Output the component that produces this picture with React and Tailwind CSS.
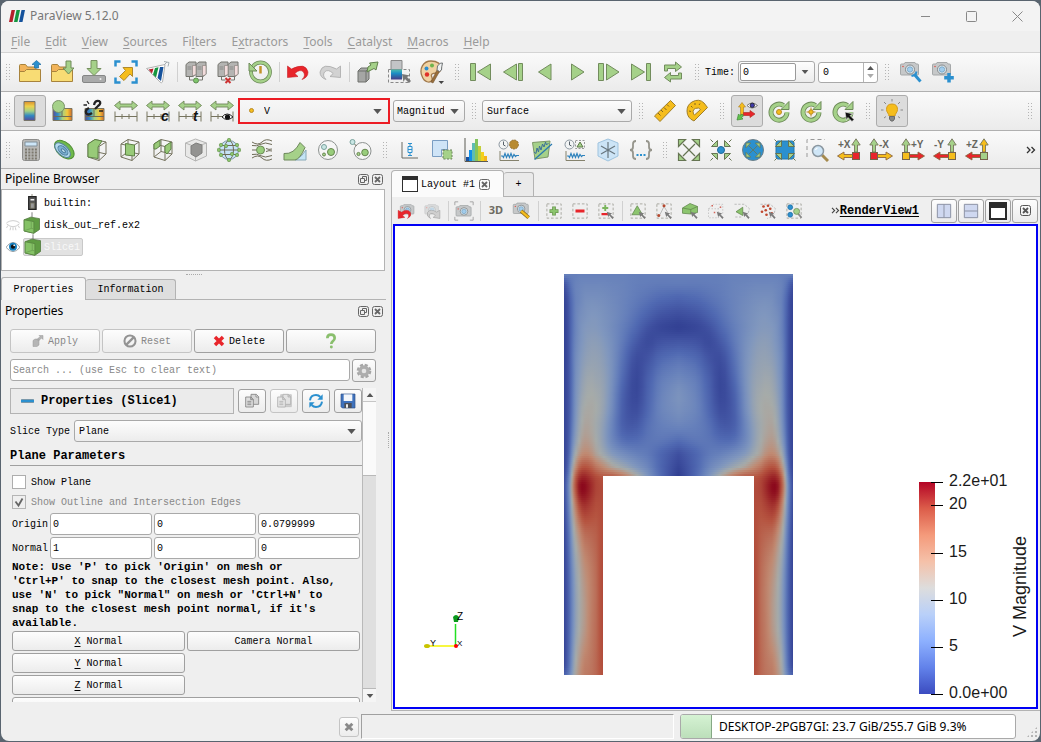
import { clsx } from 'clsx'

const GREEN = '#a5d189'
const LINE = '#6e6b57'
const BLUE = '#2b90cf'
const GOLD = '#f5bd1c'
const RED = '#e8252b'

const Icon = ({ children, className = 'size-6' }) => (
  <svg viewBox="0 0 24 24" className={clsx('shrink-0', className)} fill="none" stroke={LINE} strokeWidth="1" aria-hidden="true">
    {children}
  </svg>
)

// ---------- Shared icon parts ----------

const Folder = () => (
  <>
    <path d="M1.5 20V5.500q0-1 1-1h5l2 2.500h8.500v3" fill="#f2b45a" stroke="#a8833c" />
    <path d="M1.500 21.500v-10h5l2-2h14v12z" fill="#f8dc74" stroke="#a8833c" />
  </>
)

const Server = () => (
  <>
    <path d="M2 4.500 5 2h7v12l-3 2.500H2z" fill="#b4b4b2" stroke="#75756f" />
    <path d="M12 4.500 15 2h7v12l-3 2.500h-7z" fill="#b4b4b2" stroke="#75756f" />
    <path d="M8.500 5.500h3.500v9l-3.500 1.500zM18.500 5.500H22v9L18.500 16z" fill="#f2dcdc" stroke="#8d8783" strokeWidth=".7" />
    <path d="M3.500 7h4M3.500 9h4M13.500 7h4M13.500 9h4" stroke="#80807d" strokeWidth=".8" />
    <path d="M5.500 16.500v3.500h4M18.500 16.500v3.500h-4" stroke="#75756f" />
  </>
)

const Cube = ({ face = GREEN }) => (
  <>
    <path d="M3 6 10 1.500 21 4v12l-7 6.500L3 19z" fill="none" stroke="#75735f" />
    <path d="M3 6l11 2.500L21 4M14 8.500v14M10 1.500v12L3 19M10 13.500 21 16" stroke="#75735f" />
    <path d={face} fill="#98ca78" stroke="#5e8246" />
  </>
)

const RangeArrow = ({ children }) => (
  <Icon className="h-6 w-6">
    <path d="M.5 6.500 6 2v3h12V2l5.500 4.500L18 11V8H6v3z" fill={GREEN} stroke="#71875a" strokeWidth=".9" />
    <path d="M1 12.500v10M23 12.500v10M1 17.500h22M8 15v5M15 15v5" stroke="#76745f" />
    {children}
  </Icon>
)

const CurvedArrow = () => (
  <>
    <path d="M20 13.500a8 8 0 1 1-3.500-7" stroke="#6c8958" strokeWidth="5" />
    <path d="M22 2.500v8h-8z" fill={GREEN} stroke="#6c8958" />
    <path d="M20 13a8 8 0 1 1-3-6" stroke={GREEN} strokeWidth="3.200" />
  </>
)

const Lens = ({ x = 0, y = 0 }) => (
  <g transform={`translate(${x} ${y})`}>
    <path d="m15 15 6 6" stroke="#a58a4d" strokeWidth="3" />
    <circle cx="11" cy="11" r="5.500" fill="#cfe6f7" stroke="#8b97a0" strokeWidth="1.500" />
    <path d="M8.500 10a3 3 0 0 1 2-2" stroke="#fff" strokeWidth="1.200" />
  </g>
)

const CameraBody = ({ faded = false }) => (
  <g opacity={faded ? 0.5 : 1}>
    <path d="M1.500 5q0-1 1-1H5l1-1.500h10L17 4h1.500q1 0 1 1v9q0 1-1 1h-16q-1 0-1-1z" fill="#c6c8c9" stroke="#a5a8a9" />
    <circle cx="11" cy="9.500" r="4.500" fill="#e4ebef" stroke="#83898c" />
    <circle cx="11" cy="9.500" r="2.700" fill="#a3cdec" stroke="#6f9fc0" strokeWidth=".8" />
    <circle cx="4" cy="6.500" r=".8" fill="#e0564f" stroke="none" />
  </g>
)

const Dashed = ({ className = '' }) => (
  <rect x="2.500" y="2.500" width="19" height="19" className={className} stroke="#96958c" strokeDasharray="3.500 2.500" />
)

const SmallPointer = () => (
  <path d="m13 13 2 7 1.500-2 4 4.500 1.700-1.700-4.200-4 2.200-1.500z" fill="#7a7a7a" stroke="none" />
)

const Clock = () => (
  <>
    <circle cx="6.500" cy="6.500" r="4.500" fill="#f2f4f5" stroke="#8b969f" />
    <path d="M6.500 3.500v3.500l2 1" stroke="#57616a" />
  </>
)

const Pulse = () => (
  <>
    <path d="M3 13v9.500h19" stroke="#85826d" />
    <path d="M4 18h1.500l1 1.500 1.500-4 1.500 4 1.500-3.500 1.500 3.500 1.500-4 1.500 4 1.500-3 1.500 2 1-1H22" stroke="#2f83bd" strokeWidth="1.200" />
  </>
)

const Arrow4 = ({ out = true, fill = GREEN }) => (
  <>
    {[0, 90, 180, 270].map((deg) => (
      <g key={deg} transform={`rotate(${deg} 12 12)`}>
        {out ? (
          <path d="m12 12-6-6M1.500 1.500h7l-7 7z" fill={fill} stroke="#667553" strokeWidth="1.200" />
        ) : (
          <path d="M1.500 1.500 4 4M8.500 2.500v6h-6z" fill={fill} stroke="#667553" />
        )}
      </g>
    ))}
  </>
)

const AxisIcon = ({ label, left = true, up, side, box }) => (
  <Icon className="size-6">
    <g transform={left ? 'translate(24 0) scale(-1 1)' : undefined}>
      <path d="M3.500 14V7H.8L5 .8 9.200 7H6.500v7z" fill={up} stroke="#76765b" strokeWidth=".9" />
      <path d="M8 16.500h9v-2.500l6.500 4-6.500 4v-2.500H8z" fill={side} stroke="#8c6540" strokeWidth=".9" />
      <rect x="1.500" y="14.500" width="7" height="7" fill={box} stroke="#76654a" />
    </g>
    <text x={left ? 1 : 10} y="10" fill="#66665e" stroke="none" fontSize="10" fontWeight="bold" fontFamily="Liberation Sans, sans-serif">
      {label}
    </text>
  </Icon>
)

const Histogram = () => (
  <Icon>
    {[
      [2, 4, '#1c4f9c'], [5, 11, '#0e8ee8'], [8, 18, '#5dbcb4'], [11, 22, '#83c45d'],
      [14, 15, '#c3cf3b'], [17, 9, '#f4d01c'], [20, 5, '#f4b41c'],
    ].map(([x, h, fill]) => (
      <rect key={x} x={x} y={23 - h} width="3" height={h} fill={fill} stroke="none" />
    ))}
    <path d="M1 0v23.500h23" stroke="#5a5a52" />
  </Icon>
)

const Rainbow = ({ id, vertical }) => (
  <linearGradient id={id} x1="0" y1="0" x2={vertical ? 0 : 1} y2={vertical ? 1 : 0}>
    <stop offset="0" stopColor={vertical ? '#d98f2e' : '#5a4a9b'} />
    <stop offset=".25" stopColor={vertical ? '#efd14a' : '#2f8dc4'} />
    <stop offset=".5" stopColor="#a3d183" />
    <stop offset=".75" stopColor={vertical ? '#2f86c4' : '#f3c93c'} />
    <stop offset="1" stopColor={vertical ? '#584b96' : '#cf6a28'} />
  </linearGradient>
)

const Eye = ({ className = 'h-4 w-4' }) => (
  <Icon className={className}>
    <path d="M0 12.500q12-17 24 0-12 15-24 0z" fill="#fff" stroke="#8d979e" strokeWidth="1.500" />
    <circle cx="12" cy="11.500" r="6.800" fill="#1580c0" stroke="none" />
    <circle cx="12" cy="11.500" r="3.700" fill="#111" stroke="none" />
    <circle cx="14" cy="9" r="1.500" fill="#fff" stroke="none" />
  </Icon>
)

// ---------- Toolbar pieces ----------

const Handle = ({ className = 'w-[17px]' }) => (
  <span className={clsx('flex shrink-0 justify-center', className)}>
    <span className="h-[18px] w-[6px] bg-[radial-gradient(circle,#b4b4b4_1px,transparent_1px)] bg-[size:3px_3px]" />
  </span>
)

const Sep = () => (
  <span className="flex w-[6px] shrink-0 justify-center">
    <span className="h-5 w-px bg-[#d0d0d0]" />
  </span>
)

const Tool = ({ label, active, wide, children }) => (
  <button
    type="button"
    aria-label={label}
    title={label}
    className={clsx(
      'flex h-8 shrink-0 items-center justify-center rounded-[3px]',
      wide ? 'w-[33px]' : 'w-8',
      active && 'border border-[#acacac] bg-[#dcdcdc]'
    )}
  >
    {children}
  </button>
)

const ViewTool = ({ label, children }) => (
  <button type="button" aria-label={label} title={label} className="flex h-6 w-[26px] shrink-0 items-center justify-center">
    {children}
  </button>
)

const Toolbar = ({ label, children, className }) => (
  <div
    role="toolbar"
    aria-label={label}
    className={clsx('flex shrink-0 items-center border-b border-[#b0b0b0] bg-linear-to-b from-[#fafafa] to-[#ebebeb]', className)}
  >
    <Handle className="w-[13px]" />
    {children}
  </div>
)

const boxStyles = 'rounded-[3px] border border-[#a9a9a9]'
const raised = 'bg-linear-to-b from-[#fdfdfd] to-[#ececec]'

const Select = ({ label, value, className, selectClass = 'pl-1' }) => (
  <span className={clsx('relative block shrink-0', className)}>
    <select
      aria-label={label}
      defaultValue={value}
      className={clsx('block size-full appearance-none overflow-hidden pr-5 outline-none', selectClass)}
    >
      <option>{value}</option>
    </select>
    <span className="pointer-events-none absolute inset-y-0 right-1.5 flex items-center">
      <svg viewBox="0 0 10 6" className="h-[5px] w-[9px]" fill="#555"><path d="M0 0h10L5 6z" /></svg>
    </span>
  </span>
)

const Field = ({ label, value, className }) => (
  <input aria-label={label} defaultValue={value} className={clsx(boxStyles, 'min-w-0 bg-white px-0.5 outline-none', className)} />
)

const PushButton = ({ label, children, disabled, className }) => (
  <button
    type="button"
    disabled={disabled}
    aria-label={label}
    className={clsx(
      'flex items-center justify-center gap-1 rounded-[3px] border', raised,
      disabled ? 'border-[#c4c4c4] text-[#888]' : 'border-[#a0a0a0]',
      className
    )}
  >
    {children}
  </button>
)

// ---------- Title bar and menu ----------

const TitleBar = () => (
  <header className="flex h-[30px] shrink-0 items-center bg-[#f3f3f3] pl-2 text-[12px] text-[#777]">
    <svg viewBox="0 0 16 12" className="h-3 w-4" aria-hidden="true">
      <path d="M2.500 0H6L3.500 12H0z" fill="#b5202c" />
      <path d="M7.500 0H11L8.500 12H5z" fill="#15963f" />
      <path d="M12.500 0H16l-2.500 12H10z" fill="#15529c" />
    </svg>
    <h1 className="ml-[5px] flex-1">ParaView 5.12.0</h1>
    {[
      ['Minimize', 'M1 5.500h9'],
      ['Maximize', 'M1.500.5h8q1 0 1 1v8q0 1-1 1h-8q-1 0-1-1v-8q0-1 1-1z'],
      ['Close', 'm.5.5 10 10m0-10-10 10'],
    ].map(([name, d]) => (
      <button key={name} type="button" aria-label={name} className="flex h-full w-[46px] items-center justify-center">
        <svg viewBox="0 0 11 11" className="size-[11px]" fill="none" stroke="#888"><path d={d} /></svg>
      </button>
    ))}
  </header>
)

const menus = [
  ['', 'F', 'ile'], ['', 'E', 'dit'], ['', 'V', 'iew'], ['', 'S', 'ources'], ['Fi', 'l', 'ters'],
  ['E', 'x', 'tractors'], ['', 'T', 'ools'], ['', 'C', 'atalyst'], ['', 'M', 'acros'], ['', 'H', 'elp'],
]

const MenuBar = () => (
  <nav className="flex h-[22px] shrink-0 items-center gap-[15px] border-b border-[#d4d4d4] bg-[#efefef] pl-[10px] text-[12px] text-[#9a9a9a]">
    {menus.map(([a, key, b]) => (
      <button key={a + key + b} type="button">{a}<u className="underline-offset-2">{key}</u>{b}</button>
    ))}
  </nav>
)

// ---------- Toolbars ----------

const MainToolbar = () => (
  <Toolbar label="Main controls" className="h-[39px]">
    <Tool label="Open"><Icon><Folder /><path d="M16.500 8V4.500H14L18.500.5 23 4.500h-2.500V8z" fill={BLUE} stroke="#1d6da3" strokeWidth=".7" /></Icon></Tool>
    <Tool label="Load state"><Icon><Folder /><path d="M16 1h5v7h3l-5.500 6L13 8h3z" fill={GREEN} stroke="#6e8a58" /></Icon></Tool>
    <Tool label="Save data"><Icon><rect x=".5" y="15.500" width="23" height="7" rx="1.500" fill="#a9aaaa" stroke="#858686" /><path d="M9 .5h6v8h4l-7 7-7-7h4z" fill={GREEN} stroke="#76905f" /><circle cx="18.500" cy="19" r="1" fill="#eee" stroke="none" /></Icon></Tool>
    <Tool label="Save extracts">
      <Icon>
        <path d="M1.500 6.500v-5h5M17.500 1.500h5v5M22.500 17.500v5h-5M6.500 22.500h-5v-5" stroke={BLUE} strokeWidth="2.500" />
        <path d="m5.500 16.500 6-6L9 7.500h9.500v9L16 14l-6 6.500z" fill={GOLD} stroke="#b08a2d" />
      </Icon>
    </Tool>
    <Tool label="Catalyst">
      <Icon>
        <path d="M.5 8.500 19 4.500l-2.500 17.500q-1 1.500-2.500 0z" fill="#fff" stroke="#b0b0b0" />
        <path d="m2.500 9.500 5-1-1.500 5z" fill="#b5202c" stroke="none" />
        <path d="m9 8 3.500-.7L10 17.500 7 14.500z" fill="#15963f" stroke="none" />
        <path d="M14 7h3.500l-2.500 14-3.500-3z" fill="#15529c" stroke="none" />
        <path d="m18 5 3-3M18 1.500l5 1-1 4" stroke="#a5adb1" />
      </Icon>
    </Tool>
    <Sep />
    <Tool label="Connect"><Icon><Server /><circle cx="12" cy="20.500" r="2.500" fill="#7fc56c" stroke="#5d8b50" /></Icon></Tool>
    <Tool label="Disconnect"><Icon><Server /><path d="m9.500 18 5 5m0-5-5 5" stroke="#c33" strokeWidth="2" /></Icon></Tool>
    <Tool label="Auto reload">
      <Icon>
        <circle cx="12.500" cy="12" r="9.500" stroke="#6c8958" strokeWidth="3.800" />
        <circle cx="12.500" cy="12" r="9.500" stroke={GREEN} strokeWidth="2.300" />
        <path d="M1 3v8h8z" fill={GREEN} stroke="#6c8958" />
        <path d="M12.500 6v7.500" stroke="#c4932b" strokeWidth="2.500" />
      </Icon>
    </Tool>
    <Sep />
    <Tool label="Undo"><Icon><path d="M1.500 6v11.500l10.500-1-3.200-3Q14 8.500 17.500 12q2.500 4-1.500 7.500Q22 17.500 22 12 19.500 2 5.500 9z" fill={RED} stroke="#c62026" strokeWidth=".6" /></Icon></Tool>
    <Tool label="Redo"><Icon><path d="M22.500 6v11.500l-10.500-1 3.200-3Q10 8.500 6.500 12q-2.500 4 1.500 7.500Q2 17.500 2 12 4.500 2 18.500 9z" fill="#d2d2d2" stroke="#aaa" strokeWidth=".8" /></Icon></Tool>
    <Sep />
    <Tool label="Auto apply"><Icon><path d="m2 11 3-3h8v11l-3 3H2z" fill="#a5a6a4" stroke="#6f706d" /><path d="M2 11h8v11M10 11l3-3" stroke="#6f706d" /><path d="m11 12 1-5 3-2-1.500-2 8.500-1-2 8-2-1.500-3 1.500z" fill={GREEN} stroke="#60804b" /></Icon></Tool>
    <Tool label="Find data">
      <Icon>
        <defs>
          <linearGradient id="find" x1="0" y1="0" x2="0" y2="1"><stop offset="0" stopColor="#4cbcae" /><stop offset=".4" stopColor="#1c8cc4" /><stop offset="1" stopColor="#473c86" /></linearGradient>
        </defs>
        <path d="M.5 9.500h21v13H.5z" stroke="#888" strokeDasharray="3 2" />
        <path d="M3 .5h11v9H3z" fill="#c2c4c6" stroke="#888" />
        <path d="M3 9.500h11v10H3z" fill="url(#find)" stroke="none" />
        <path d="m14 14 8 1.500-3 1.500 4 4-2 2-4-4-1.500 3z" fill="#777" stroke="none" />
      </Icon>
    </Tool>
    <Tool label="Color palette">
      <Icon>
        <path d="M11 1C3 1-1 9 2 16c2 6 8 8 10 4 1-3-2-4 0-6 3-2 8 1 9-5C22 4 17 1 11 1z" fill="#f0d2a2" stroke="#a0794c" strokeWidth="1.300" />
        <circle cx="6.500" cy="8.500" r="2" fill="#2d8ed0" stroke="none" />
        <circle cx="12" cy="5.500" r="2" fill="#6fb44c" stroke="none" />
        <circle cx="7" cy="14.500" r="2.200" fill="#e03028" stroke="none" />
        <path d="m11 22 6-12 2.500 1.500L13 23z" fill="#9a6e3a" stroke="#6f5230" strokeWidth=".6" />
        <path d="m17 10 .5-4q3-4 5-3-1 4-1 7l-2 1.500z" fill="#eef1f2" stroke="#6f7375" />
        <path d="M18.500 21H24l-2.700 3z" fill="#444" stroke="none" />
      </Icon>
    </Tool>
    <Handle />
    {[
      ['First frame', <path d="M1.500 3.500h5v17h-5zM21.500 4v16L8.500 12z" />],
      ['Previous frame', <path d="M17.500 3.500h4v17h-4zM15.500 4v16L2.500 12z" />],
      ['Reverse', <path d="M18 4v16L5.500 12z" />],
      ['Play', <path d="M6.500 4v16L19 12z" />],
      ['Next frame', <path d="M1.500 3.500h5v17h-5zM9.500 4v16l12.500-8z" />],
      ['Last frame', <path d="M17.500 3.500h4v17h-4zM2.500 4v16l13-8z" />],
      ['Loop', <path d="M3.500 11V5h11V2l6 5-6 4.500V8.500h-8V11zM20.500 13v6h-11v3l-6-4.500 6-5V15.500h8V13z" />],
    ].map(([name, shape]) => (
      <Tool key={name} label={name}><Icon><g fill={GREEN} stroke="#728c5d">{shape}</g></Icon></Tool>
    ))}
    <Handle className="w-4" />
    <label className="flex shrink-0 items-center gap-[3px]">
      Time:
      <span className={clsx(boxStyles, raised, 'flex h-[22px] w-[77px] p-px')}>
        <input defaultValue="0" className="h-full w-14 rounded-[2px] border border-[#999] bg-white px-0.5 outline-none" />
        <span className="flex flex-1 items-center justify-center">
          <svg viewBox="0 0 10 6" className="h-1 w-2" fill="#555"><path d="M0 0h10L5 6z" /></svg>
        </span>
      </span>
    </label>
    <span className={clsx(boxStyles, 'ml-[3px] flex h-[21px] w-[60px] shrink-0 bg-white')}>
      <input aria-label="Time step" defaultValue="0" className="w-[45px] border-r border-[#b5b5b5] px-1 outline-none" />
      <span className="flex flex-1 flex-col items-center justify-center gap-1">
        <svg viewBox="0 0 10 6" className="h-1 w-[7px]" fill="#555"><path d="M0 6h10L5 0z" /></svg>
        <svg viewBox="0 0 10 6" className="h-1 w-[7px]" fill="#aaa"><path d="M0 0h10L5 6z" /></svg>
      </span>
    </span>
    <Handle />
    <Tool label="Adjust camera"><Icon><CameraBody /><path d="m15 14 6.500 7.500" stroke={BLUE} strokeWidth="3" /><path d="m17.500 11.500-1 3.500-4 1" stroke={BLUE} strokeWidth="2" /></Icon></Tool>
    <Tool label="Add camera link"><Icon><CameraBody /><path d="M18 13v9.500M13.200 17.700h9.600" stroke={BLUE} strokeWidth="3.500" /></Icon></Tool>
  </Toolbar>
)

const ColorToolbar = () => (
  <Toolbar label="Color and representation" className="h-[39px]">
    <Tool label="Toggle color legend" active>
      <Icon><defs><Rainbow id="legend" vertical /></defs><path d="M6 2.500h11v19H6z" fill="url(#legend)" stroke="#77746a" /></Icon>
    </Tool>
    <Tool label="Edit color map">
      <Icon>
        <defs><Rainbow id="bar" /></defs>
        <path d="M3 9.500h19v12H3z" fill="url(#bar)" stroke="#7b765f" />
        <path d="M3 17.500h19M12 9.500v8" /><circle cx="8.500" cy="7.500" r="6" fill={GREEN} stroke="#7a9367" />
      </Icon>
    </Tool>
    <Tool label="Use separate color map">
      <Icon>
        <path d="M3 9.500h19v12H3z" fill="url(#bar)" stroke="#7b765f" /><path d="M3 17.500h19M12 9.500v8" />
        <path d="M10 14q-4 3-6 0-1-3 3-5M12 6q1-5 5-4 3 2-1 5l-3 3" stroke="#222" strokeWidth="2.300" />
        <path d="m5 2 2 3M1.500 6H5M17 12h4" stroke="#222" strokeWidth="1.300" />
      </Icon>
    </Tool>
    <Tool label="Rescale to data range"><RangeArrow /></Tool>
    {[['Rescale to custom range', 'c'], ['Rescale over time', 't']].map(([name, letter]) => (
      <Tool key={letter} label={name}>
        <RangeArrow>
          <text x="15" y="22" fill="#111" stroke="none" fontSize="14" fontStyle="italic" fontWeight="bold" fontFamily="Liberation Sans, sans-serif">{letter}</text>
        </RangeArrow>
      </Tool>
    ))}
    <Tool label="Rescale to visible range">
      <RangeArrow>
        <path d="M12 18q5-6 11 0-6 5-11 0z" fill="#fff" stroke="#222" /><circle cx="17.500" cy="18" r="2.600" fill="#111" stroke="none" />
      </RangeArrow>
    </Tool>
    <span className="relative block h-[26px] w-[152px] shrink-0 border-2 border-[#ec1c24]">
      <Select label="Color array" value="V" className="size-full" selectClass="pl-6" />
      <span className="pointer-events-none absolute top-2 left-[9px] size-[5px] rounded-full border border-[#b98a26] bg-[#f5bd1c]" />
    </span>
    <Select label="Component" value="Magnitude" className="ml-[3px] h-[22px] w-[72px]" selectClass={clsx(boxStyles, raised, 'pl-[3px]')} />
    <Handle />
    <Select label="Representation" value="Surface" className="h-[22px] w-[150px]" selectClass={clsx(boxStyles, raised, 'pl-1')} />
    <Handle />
    <Tool label="Ruler"><Icon><path d="m1.500 17 16-15.500 5 5L7 22.500z" fill={GOLD} stroke="#a17f2a" /><path d="m5 14 2.500 2.500M8 11l2 2M11 8.500l2.500 2.500M14 5.500l2 2" stroke="#806522" /></Icon></Tool>
    <Tool label="Protractor"><Icon><path d="M2 12q0-6 5-9 7-4 12 1l3.500 4.500L9 22Q2 19 2 12z" fill={GOLD} stroke="#a17f2a" /><path d="M8.500 15q-2-6 5-6l2 1.500-6 5.500z" fill="#f4f4f4" stroke="#a17f2a" /><path d="m4 12 2 .5M6 7l1.500 1.500M10 4v2M15 4.500l-1 1.500" stroke="#806522" /></Icon></Tool>
    <Handle className="w-[18px]" />
    <Tool label="Show orientation axes" active>
      <Icon>
        <path d="M5.500 16V8h-2L7 3.500 10.500 8h-2v8z" fill={GOLD} stroke="#b0852d" strokeWidth=".7" />
        <path d="M8.500 13.500H15V11.500l5 3.500-5 3.500v-2H8.500z" fill={RED} stroke="#b33426" strokeWidth=".7" />
        <path d="m7 15-2 1.500-1.500-1.500-1.500 6 6-1-1.500-1.500L8.500 17z" fill="#5fc14c" stroke="#3f8a35" strokeWidth=".7" />
        <path d="M12 6.500q5-5 10.500 0-5.500 5-10.500 0z" fill="#fff" stroke="#777" /><circle cx="17.300" cy="6.300" r="2.200" fill="#3f3aa8" stroke="#222" strokeWidth=".8" />
      </Icon>
    </Tool>
    <Tool label="Show center"><Icon><CurvedArrow /><circle cx="12" cy="13" r="2.500" fill={GOLD} stroke="#b98a26" /></Icon></Tool>
    <Tool label="Reset center"><Icon><CurvedArrow /><path d="M12 8.500v9M7.500 13h9" stroke="#b98a26" /><circle cx="12" cy="13" r="2.200" fill={GOLD} stroke="#b98a26" /></Icon></Tool>
    <Tool label="Pick center"><Icon><CurvedArrow /><path d="m14 13 8 2-3 1.500 4 4-2 2-4-4-1.500 3z" fill="#111" stroke="#eee" strokeWidth=".6" /></Icon></Tool>
    <Handle />
    <Tool label="Light kit" active>
      <Icon>
        <path d="M12 5q5.500 0 5.500 5.500c0 3-2.500 4-2.500 6.500H9c0-2.500-2.500-3.500-2.500-6.500Q6.500 5 12 5z" fill={GOLD} stroke="#d39b1c" />
        <path d="M9.500 17.500h5v2.500l-1.500 2h-2l-1.500-2z" fill="#858886" stroke="#6a6a6a" />
        <path d="M12 0v2.500M4 3l2 2M20 3l-2 2M1 11h2.500M20.500 11H23M4 19l2-1.500M20 19l-2-1.500" stroke="#888" />
      </Icon>
    </Tool>
    <span className="flex-1" />
    <Handle className="w-[21px]" />
  </Toolbar>
)

const filters = [
  ['Calculator', <><rect x="3.500" y="1.500" width="17" height="21" rx="2" fill="#b9b9b7" stroke="#8d8d8b" /><path d="M6 4h12v4H6z" fill="#cde6f8" stroke="#84929b" /><path d="M6 11.500h12M6 14.500h12M6 17.500h12M6 20.500h12" stroke="#7d796e" strokeWidth="1.800" strokeDasharray="2 1.300" /></>],
  ['Contour', <g transform="rotate(42 12 12)"><ellipse cx="12" cy="11.500" rx="11.500" ry="7" fill="#6fb94b" stroke="#4d8c32" /><ellipse cx="11" cy="13" rx="9.500" ry="5" fill="#b4daee" stroke="#55839a" /><ellipse cx="11.500" cy="13" rx="6" ry="3.300" fill="#7cb0d2" stroke="#4f7f9f" /><ellipse cx="12" cy="13" rx="2.500" ry="1.300" fill="#c3e2f0" stroke="#4f7f9f" /></g>],
  ['Clip', <Cube face="M3 6 10 1.500l7 1.500-4 6v11.500L3 19z" />],
  ['Slice', <Cube face="m7.500 5.500 9 1.500v11l-9-1z" />],
  ['Threshold', <Cube face="M3 6l6-4v6l-4 3H3zM14 8l6-4v7l-4 5-2-2z" />],
  ['Extract subset', <><path d="m1.500 5 10-4 11 4v13l-11 5-10-5z" fill="#e8e8e7" stroke="#b5b5b4" /><path d="m1.500 5 10 4 11-4M11.500 9v14" stroke="#b5b5b4" /><path d="m7 8 5-3 6 2v8l-6 4-5-3z" fill="#939391" stroke="#7d7d7b" /></>],
  ['Glyph', <><circle cx="12" cy="12" r="9.500" fill="#c6e3f7" stroke="#8199a6" /><ellipse cx="12" cy="12" rx="4.500" ry="9.500" /><path d="M3.500 7.500h17M3.500 16.500h17M1.500 12h21" />{[[12, 2], [12, 22], [4, 7], [20, 7], [4, 17], [20, 17], [1.8, 12], [22.2, 12], [9, 8], [15, 16]].map(([x, y]) => <circle key={`${x}-${y}`} cx={x} cy={y} r="1.700" fill="#8bc56c" stroke="#6a9653" strokeWidth=".7" />)}</>],
  ['Stream tracer', <><path d="M2 4q6 4 10 0t10-1M2 7.500q5 1 8-1 5-3 12 0M2 12h4M2 16.500q5-1 8 1 5 3 12 0M2 20q6-4 10 0t10 1M16 10.500q3 1.500 6 .5M16 13.500q3-1.500 6-.5" /><circle cx="10.500" cy="12" r="4" fill="#98cd7b" stroke="#6b8856" /></>],
  ['Warp', <><path d="M23 12v10H12q7-3 11-10z" fill="#c3e4f5" stroke="#86a8b6" /><path d="M1 15.500q10 1 16-11l5 5Q17 21 12 22H1z" fill={GREEN} stroke="#6c875a" /></>],
  ['Group datasets', <><circle cx="12" cy="12" r="9.500" fill="#f6f6f6" stroke="#8d9290" /><circle cx="15" cy="14" r="3.500" fill="#98cd7b" stroke="#66864f" /><circle cx="8" cy="9" r="2.500" fill="#c9e6e4" stroke="#7aa39d" /><circle cx="8" cy="16.500" r="1.500" fill={GREEN} stroke="#66864f" /></>],
  ['Extract group', <><circle cx="13.500" cy="13" r="8.500" fill="#f6f6f6" stroke="#8d9290" /><circle cx="16" cy="14.500" r="3.300" fill="#98cd7b" stroke="#66864f" /><circle cx="3.500" cy="4" r="2.500" fill="#c9e6e4" stroke="#7aa39d" /><circle cx="9.500" cy="16" r="1.600" fill={GREEN} stroke="#66864f" /><path d="m5.500 6 2 2" /></>],
]

const analysis = [
  ['Box chart', <><path d="M4 4v16h16" stroke="#6a6a62" /><path d="M12 5v13M10 5.500h4M10 17.500h4" stroke={BLUE} /><path d="M10 8.500h4v6h-4zM10 11.500h4" fill="#eaf4fb" stroke={BLUE} /></>],
  ['Extract selection', <><path d="M1.500 2.500h15v9h-6v7h-9z" fill="#cfe4f7" stroke="#7a9dc2" /><path d="M12 12h9v9h-9z" fill={GREEN} stroke="#68805a" strokeDasharray="2 1.500" /></>],
  ['Histogram', null],
  ['Plot data over time', <><Clock /><circle cx="17" cy="6.500" r="4.500" fill="#b88a30" stroke="#927030" strokeDasharray="2 1" /><Pulse /></>],
  ['Plot over line', <><path d="M2.500 4.500 20 3l-2 16L5 21z" fill={GREEN} stroke="#7c9766" /><path d="M4.500 21.500 22 6" stroke="#2879b0" strokeWidth="1.200" /><path d="m4 14 2 1.500L7 10l1.500 4 1-6 1.500 4 1.500-6 1.500 3 1.500-5 1 3 2-2" stroke="#3a6f99" /></>],
  ['Plot selection over time', <><Clock /><path d="M12.500 2.500h9v8h-9z" stroke="#999" strokeDasharray="2 1.500" /><path d="m17 4 3 5h-6z" fill={GREEN} stroke="#5d7a49" /><Pulse /></>],
  ['Probe', <><path d="m2 5 10-4 10 4v13l-10 5-10-5z" fill="#cce4f6" stroke="#9fc3de" /><path d="M12 4v16M5 8l14 8M19 8 5 16" stroke="#69777f" strokeWidth="1.200" /></>],
  ['Programmable filter', <><path d="M7 3Q4 3 4 6v3q0 3-3 3 3 0 3 3v3q0 3 3 3M17 3q3 0 3 3v3q0 3 3 3-3 0-3 3v3q0 3-3 3" stroke="#96958c" strokeWidth="1.800" /><path d="M7.500 17h9" stroke={BLUE} strokeWidth="2" strokeDasharray="2 1.500" /></>],
]

const FilterToolbar = () => (
  <Toolbar label="Filters and camera" className="h-[38px]">
    {filters.map(([name, shape]) => (
      <Tool key={name} label={name} wide><Icon>{shape}</Icon></Tool>
    ))}
    <Handle className="w-4" />
    {analysis.map(([name, shape]) => (
      <Tool key={name} label={name} wide>{shape ? <Icon>{shape}</Icon> : <Histogram />}</Tool>
    ))}
    <Handle className="w-4" />
    <Tool label="Reset camera"><Icon><Arrow4 /></Icon></Tool>
    <Tool label="Zoom to data"><Icon><Arrow4 out={false} /><circle cx="12" cy="12" r="3.500" fill={BLUE} stroke="#1f6b9b" /></Icon></Tool>
    <Tool label="Reset camera closest"><Icon><circle cx="12" cy="12" r="10.500" fill={BLUE} stroke="#6d7f88" /><g transform="translate(4 4) scale(.67)"><Arrow4 /></g></Icon></Tool>
    <Tool label="Zoom closest to data"><Icon><rect x="3" y="3" width="18" height="18" rx="2" fill={BLUE} stroke="#2277ab" /><Arrow4 out={false} /></Icon></Tool>
    <Tool label="Zoom to box"><Icon><path d="M2 19V1.500h18" stroke="#999" strokeDasharray="4 3" /><Lens x={2} y={2} /></Icon></Tool>
    <Tool label="+X"><AxisIcon label="+X" up={GREEN} side={GOLD} box={RED} /></Tool>
    <Tool label="-X"><AxisIcon label="-X" left={false} up={GREEN} side={GOLD} box={RED} /></Tool>
    <Tool label="+Y"><AxisIcon label="+Y" left={false} up={GREEN} side={RED} box={GOLD} /></Tool>
    <Tool label="-Y"><AxisIcon label="-Y" up={GREEN} side={RED} box={GOLD} /></Tool>
    <Tool label="+Z"><AxisIcon label="+Z" up={GOLD} side={RED} box={GREEN} /></Tool>
    <span className="flex-1" />
    <button type="button" aria-label="More tools" className="mr-1">
      <svg viewBox="0 0 10 8" className="h-2 w-2.5" fill="none" stroke="#333" strokeWidth="1.300"><path d="m1 1 3 3-3 3M5.500 1l3 3-3 3" /></svg>
    </button>
  </Toolbar>
)

// ---------- Left dock ----------

const DockButton = ({ kind }) => (
  <button type="button" aria-label={kind} className="flex size-[11px] items-center justify-center">
    <svg viewBox="0 0 11 11" className="size-[11px]" fill="none" stroke="#666">
      <rect x=".5" y=".5" width="10" height="10" rx="2" />
      {kind === 'Close' ? <path d="m3 3 5 5m0-5L3 8" strokeWidth="1.800" /> : <path d="M2.500 4.500h4v4h-4zM4.500 4.500v-2h4v4h-2" />}
    </svg>
  </button>
)

const DockTitle = ({ children, className }) => (
  <div className={clsx('flex shrink-0 items-center gap-[3px] pr-[3px] pl-1', className)}>
    <h2 className="flex-1 font-['Noto_Sans',sans-serif] text-[12px]">{children}</h2>
    <DockButton kind="Float" />
    <DockButton kind="Close" />
  </div>
)

const GreenCube = () => (
  <Icon className="size-[18px] overflow-visible">
    <path d="M12-5v7" stroke="#555" />
    <path d="m1.500 5 9-3.500 11.500 2v14.500l-7.500 5L1.500 20z" fill="#5f9c43" stroke="#4b7437" />
    <path d="m1.500 5 13 2.500v15.500L1.500 20z" fill="#85c266" stroke="#568240" />
    <path d="M11 7v9.500l-9 3M11 16.500l3.500.5" stroke="#6a9e50" />
  </Icon>
)

const PipelineTree = () => (
  <ul className="h-[82px] w-[384px] shrink-0 border border-[#b3b3b3] bg-white py-0.5">
    <li className="flex h-[22px] items-center pl-[21px]">
      <Icon className="size-[18px]"><path d="M7.500 3.500h10v17h-10z" fill="#555" stroke="#222" strokeWidth="1.500" /><path d="M10 6.500h5v2h-5z" fill="#eee" stroke="none" /><path d="M12 0v3M10 12h5v7h-5z" fill="#999" /></Icon>
      <span className="ml-[3px]">builtin:</span>
    </li>
    <li className="flex h-[22px] items-center pl-1">
      <Icon className="size-[14px]"><path d="M1 10q11 10 22 0M1 8q11-7 22 0M3 13l-2 4M8 16l-1 5M16 16l1 5M21 13l2 4M12 16v5" stroke="#aaa" /></Icon>
      <span className="ml-[3px]"><GreenCube /></span>
      <span className="ml-[3px]">disk_out_ref.ex2</span>
    </li>
    <li className="flex h-[22px] items-center pl-1">
      <Eye className="size-[14px]" />
      <span className="ml-[3px] flex h-[18px] w-[60px] items-center rounded-[2px] border border-[#c9c9c9] bg-[#e2e2e2] text-[#f8f8f8]">
        <GreenCube /><span className="ml-0.5">Slice1</span>
      </span>
    </li>
  </ul>
)

const DockTabs = () => (
  <div role="tablist" className="flex h-[23px] shrink-0 items-end border-b border-[#b3b3b3]">
    <button role="tab" aria-selected="true" type="button" className="-mb-px h-[23px] w-[85px] rounded-t-[3px] border border-b-0 border-[#b3b3b3] bg-[#f6f6f6]">Properties</button>
    <button role="tab" aria-selected="false" type="button" className="h-5 w-[90px] rounded-t-[3px] border border-b-0 border-l-0 border-[#b3b3b3] bg-[#dedede]">Information</button>
  </div>
)

const VectorRow = ({ name, values }) => (
  <div className="flex h-[22px] items-center gap-0.5">
    <span className="w-9 shrink-0">{name}</span>
    {values.map((v, i) => (
      <Field key={i} label={`${name} ${'XYZ'[i]}`} value={v} className="h-full flex-1" />
    ))}
  </div>
)

const note = [
  "Note: Use 'P' to pick 'Origin' on mesh or",
  "'Ctrl+P' to snap to the closest mesh point. Also,",
  "use 'N' to pick \"Normal\" on mesh or 'Ctrl+N' to",
  "snap to the closest mesh point normal, if it's",
  'available.',
]

const NormalButton = ({ letter }) => (
  <PushButton className="h-5">
    <span><u className="underline-offset-2">{letter}</u> Normal</span>
  </PushButton>
)

const CopyShape = () => (
  <>
    <path d="M10.500 2h8l3.500 3.500V17H10.500zM18 2v4h4" fill="#d6d6d6" stroke="#858585" strokeWidth="1.300" />
    <path d="M2.500 6h8l3.500 3.500V21H2.500zM10 6v4h4M5 12.500h6M5 15h6M5 17.500h6" fill="#dedede" stroke="#858585" strokeWidth="1.300" />
  </>
)

const SliceProperties = () => (
  <div className="min-w-0 flex-1 overflow-hidden">
    <div className="flex items-center justify-between">
      <h3 className="flex h-[26px] w-56 items-center gap-[7px] border border-[#b3b3b3] bg-[#ebebeb] pl-2.5 text-[12px] font-bold">
        <span className="h-1 w-[13px] rounded-[1px] border-y border-[#7a98aa] bg-[#2b90cf]" />
        Properties (Slice1)
      </h3>
      <PushButton label="Copy" className="h-6 w-7"><Icon className="size-4"><CopyShape /></Icon></PushButton>
      <PushButton label="Paste" disabled className="h-6 w-7"><Icon className="size-4 opacity-60"><path d="M7 2.500h16v18H7z" fill="#b5b5b5" stroke="#999" /><CopyShape /></Icon></PushButton>
      <PushButton label="Restore defaults" className="h-6 w-7">
        <Icon className="size-4"><path d="M3 11q1-8 9-8 4 0 6.500 3M21 13q-1 8-9 8-4 0-6.500-3" stroke={BLUE} strokeWidth="3" /><path d="M22 2v8h-8zM2 22v-8h8z" fill={BLUE} stroke="none" /></Icon>
      </PushButton>
      <PushButton label="Save defaults" className="h-6 w-7">
        <Icon className="size-4"><path d="M1.500 1.500h21v21h-19l-2-2z" fill="#3f72bd" stroke="#2d4f87" /><path d="M5.500 2h13v10h-13z" fill="#f3f6fa" stroke="none" /><path d="M6.500 15h11v7.500h-11z" fill="#4c4f57" stroke="none" /><path d="M9 17h3v5H9z" fill="#eee" stroke="none" /></Icon>
      </PushButton>
    </div>
    <div className="mt-1.5 flex h-[22px] items-center justify-between">
      <span>Slice Type</span>
      <Select label="Slice Type" value="Plane" className="h-full w-72" selectClass={clsx(boxStyles, raised, 'pl-1')} />
    </div>
    <h3 className="mt-1.5 h-[18px] border-b border-[#a0a0a0] text-[12px] leading-4 font-bold">Plane Parameters</h3>
    <div className="mr-0.5 ml-0.5">
      <label className="mt-2 flex h-4 items-center gap-[5px]">
        <input type="checkbox" className="size-[14px] appearance-none border border-[#adadad] bg-white" />
        Show Plane
      </label>
      <label className="mt-1 mb-[3px] flex h-4 items-center gap-[5px] text-[#888]">
        <span className="relative flex size-[14px]">
          <input type="checkbox" defaultChecked disabled className="size-[14px] appearance-none border border-[#b5b5b5] bg-[#efefef]" />
          <svg viewBox="0 0 14 14" className="pointer-events-none absolute inset-0" fill="none" stroke="#666" strokeWidth="1.800"><path d="m3.500 6.500 3 4 4-7" /></svg>
        </span>
        Show Outline and Intersection Edges
      </label>
      <div className="flex flex-col gap-0.5">
        <VectorRow name="Origin" values={['0', '0', '0.0799999']} />
        <VectorRow name="Normal" values={['1', '0', '0']} />
      </div>
      <p className="mt-px text-[11px] leading-[14px] font-bold">
        {note.map((line) => <span key={line} className="block whitespace-nowrap">{line}</span>)}
      </p>
      <div className="mt-px grid grid-cols-2 gap-0.5">
        <NormalButton letter="X" />
        <PushButton className="h-5">Camera Normal</PushButton>
        <div className="flex flex-col gap-0.5">
          <NormalButton letter="Y" />
          <NormalButton letter="Z" />
        </div>
        <PushButton label="Reset to Data Bounds" className="col-span-2 h-5" />
      </div>
    </div>
  </div>
)

const ScrollBar = () => (
  <div className="flex w-[14px] shrink-0 flex-col border-l border-[#b9b9b9] bg-[#dfdfdf]">
    <div className="flex h-3.5 items-center justify-center border-b border-[#c6c6c6] bg-[#f5f5f5]">
      <svg viewBox="0 0 10 6" className="h-1 w-2" fill="#555"><path d="M0 6h10L5 0z" /></svg>
    </div>
    <div className="h-[74px] border-b border-[#b9b9b9] bg-[#fafafa]" />
    <div className="flex-1" />
    <div className="flex h-3.5 items-center justify-center border-t border-[#b9b9b9] bg-[#f5f5f5]">
      <svg viewBox="0 0 10 6" className="h-1 w-2" fill="#555"><path d="M0 0h10L5 6z" /></svg>
    </div>
  </div>
)

const LeftDock = () => (
  <aside className="flex w-[385px] shrink-0 flex-col">
    <DockTitle className="h-5">Pipeline Browser</DockTitle>
    <PipelineTree />
    <div className="flex h-1.5 shrink-0 items-center justify-center">
      <span className="w-4 border-t border-dotted border-[#aaa]" />
    </div>
    <DockTabs />
    <DockTitle className="h-[22px]">Properties</DockTitle>
    <div className="mt-[7px] flex min-h-0 flex-1 flex-col pr-[10px] pb-[9px] pl-[9px]">
      <div className="grid shrink-0 grid-cols-4 gap-0.5">
        <PushButton disabled className="h-6">
          <Icon className="size-3"><path d="m2 11 4-3h8v12l-4 3H2zM14 1h8v8l-3-3-6 6-3-3 6-6z" fill="#b5b5b5" stroke="#999" /></Icon>Apply
        </PushButton>
        <PushButton disabled className="h-6">
          <Icon className="size-3.5"><path d="M5 19 19 5" stroke="#939393" strokeWidth="4" /><circle cx="12" cy="12" r="9.500" stroke="#939393" strokeWidth="3.500" /></Icon>Reset
        </PushButton>
        <PushButton className="h-6">
          <Icon className="size-3"><path d="m4 4 16 16m0-16L4 20" stroke={RED} strokeWidth="7" /></Icon>Delete
        </PushButton>
        <PushButton label="Help" className="h-6">
          <Icon className="size-4"><path d="M6.500 8q0-5.500 5.500-5.500t5.500 5q0 3-3 5-2 1.500-2 4" stroke="#8abf6d" strokeWidth="4" /><circle cx="12.500" cy="21" r="2.200" fill="#8abf6d" stroke="none" /></Icon>
        </PushButton>
      </div>
      <div className="mt-1.5 flex h-[22px] shrink-0 gap-0.5">
        <input aria-label="Search" placeholder="Search ... (use Esc to clear text)" className={clsx(boxStyles, 'min-w-0 flex-1 bg-white px-0.5 outline-none placeholder:text-[#888]')} />
        <PushButton label="Advanced properties" className="h-[23px] w-6">
          <Icon className="size-4"><circle cx="12" cy="12" r="9" stroke="#a5a5a5" strokeWidth="4" strokeDasharray="4.500 2.570" /><circle cx="12" cy="12" r="6" fill="#e5e5e5" stroke="#adadad" strokeWidth="5" /></Icon>
        </PushButton>
      </div>
      <div className="mt-[7px] flex min-h-0 flex-1">
        <SliceProperties />
        <ScrollBar />
      </div>
    </div>
  </aside>
)

// ---------- Slice drawing ----------

// velocity magnitude sampled on one half of the slice, the other half mirrors it
const sampleX = [0, 3, 6, 9, 12, 16, 20, 26, 32, 39, 48, 60, 72, 84, 96, 114.5]
const samples = [
  [0, [0.34, 0.34, 0.34, 0.34, 0.34, 0.35, 0.35, 0.35, 0.35, 0.35, 0.35, 0.35, 0.34, 0.34, 0.34, 0.34]],
  [10, [0.12, 0.2, 0.28, 0.33, 0.36, 0.37, 0.38, 0.38, 0.38, 0.38, 0.37, 0.36, 0.34, 0.33, 0.32, 0.32]],
  [26, [0.05, 0.1, 0.22, 0.3, 0.36, 0.38, 0.41, 0.42, 0.42, 0.41, 0.39, 0.36, 0.32, 0.28, 0.24, 0.21]],
  [42, [0.03, 0.09, 0.2, 0.3, 0.37, 0.41, 0.43, 0.45, 0.45, 0.43, 0.4, 0.35, 0.28, 0.2, 0.13, 0.09]],
  [53, [0.03, 0.08, 0.2, 0.3, 0.37, 0.42, 0.45, 0.46, 0.46, 0.44, 0.4, 0.33, 0.24, 0.13, 0.07, 0.03]],
  [66, [0.03, 0.08, 0.2, 0.31, 0.38, 0.43, 0.46, 0.48, 0.48, 0.46, 0.41, 0.31, 0.18, 0.09, 0.13, 0.15]],
  [83, [0.03, 0.08, 0.2, 0.32, 0.4, 0.45, 0.48, 0.5, 0.5, 0.48, 0.42, 0.27, 0.11, 0.14, 0.24, 0.29]],
  [103, [0.04, 0.09, 0.2, 0.32, 0.42, 0.47, 0.51, 0.53, 0.52, 0.5, 0.42, 0.23, 0.07, 0.2, 0.32, 0.38]],
  [119, [0.04, 0.09, 0.2, 0.33, 0.43, 0.49, 0.53, 0.55, 0.54, 0.51, 0.41, 0.19, 0.07, 0.22, 0.35, 0.43]],
  [133, [0.04, 0.1, 0.2, 0.34, 0.44, 0.51, 0.55, 0.56, 0.55, 0.51, 0.4, 0.18, 0.1, 0.24, 0.36, 0.42]],
  [150, [0.05, 0.1, 0.22, 0.36, 0.46, 0.53, 0.57, 0.57, 0.54, 0.49, 0.37, 0.19, 0.17, 0.28, 0.34, 0.37]],
  [165, [0.05, 0.11, 0.25, 0.4, 0.49, 0.56, 0.6, 0.59, 0.55, 0.49, 0.38, 0.27, 0.26, 0.3, 0.31, 0.27]],
  [180, [0.05, 0.13, 0.3, 0.47, 0.56, 0.63, 0.66, 0.65, 0.59, 0.54, 0.47, 0.41, 0.36, 0.32, 0.24, 0.11]],
  [192, [0.06, 0.17, 0.38, 0.55, 0.65, 0.75, 0.78, 0.76, 0.7, 0.65, 0.58, 0.52, 0.45, 0.37, 0.24, 0.05]],
  [202, [0.08, 0.24, 0.44, 0.62, 0.76, 0.88, 0.91, 0.86, 0.8, 0.77, 0.77, 0.7, 0.58, 0.44, 0.27, 0]],
  [212, [0.1, 0.28, 0.47, 0.66, 0.8, 0.98, 1, 0.91, 0.82, 0.8]],
  [232, [0.08, 0.25, 0.43, 0.58, 0.69, 0.81, 0.86, 0.83, 0.79, 0.8]],
  [260, [0.05, 0.2, 0.35, 0.5, 0.58, 0.65, 0.71, 0.73, 0.75, 0.8]],
  [300, [0.05, 0.15, 0.29, 0.42, 0.51, 0.57, 0.62, 0.67, 0.72, 0.81]],
  [350, [0.05, 0.15, 0.28, 0.41, 0.5, 0.56, 0.6, 0.67, 0.72, 0.81]],
  [390, [0.07, 0.19, 0.33, 0.47, 0.56, 0.62, 0.67, 0.69, 0.73, 0.8]],
  [402, [0.25, 0.3, 0.4, 0.5, 0.58, 0.64, 0.68, 0.7, 0.73, 0.79]],
]

const ramp = [
  [0, 47, 61, 144], [0.12, 63, 80, 160], [0.25, 80, 105, 178], [0.35, 103, 129, 187], [0.45, 128, 151, 190],
  [0.55, 166, 171, 169], [0.65, 192, 138, 114], [0.78, 181, 83, 63], [0.9, 156, 38, 40], [1, 139, 8, 28],
]

const rampColor = (value) => {
  const v = Math.min(1, Math.max(0, value))
  const i = Math.max(1, ramp.findIndex(([stop]) => stop >= v))
  const [a, b] = [ramp[i - 1], ramp[i]]
  const t = (v - a[0]) / (b[0] - a[0])
  return `rgb(${[1, 2, 3].map((c) => Math.round(a[c] + (b[c] - a[c]) * t)).join(',')})`
}

// cubic Hermite through the samples
const spline = (xs, vs, x) => {
  const last = xs.length - 1
  let i = 0
  while (i < last - 1 && xs[i + 1] <= x) i++
  const slope = (k) => {
    const lo = Math.max(0, k - 1)
    const hi = Math.min(last, k + 1)
    return (vs[hi] - vs[lo]) / (xs[hi] - xs[lo])
  }
  const h = xs[i + 1] - xs[i]
  const t = (x - xs[i]) / h
  const u = 1 - t
  return (1 + 2 * t) * u * u * vs[i] + t * u * u * h * slope(i)
    + t * t * (3 - 2 * t) * vs[i + 1] - t * t * u * h * slope(i + 1)
}

const STEP = 2
const half = [0, 2, 4, 6, 8, 10, 12, 15, 18, 21, 24, 28, 32, 36, 40, 44, 48, 53, 58, 63, 68, 73, 78, 83, 88, 93, 98, 103, 109, 114]
const rowsY = samples.map(([y]) => y)

const sliceRows = Array.from({ length: 402 / STEP }, (_, n) => {
  const y = n * STEP
  const row = sampleX.map((_x, k) => spline(rowsY, samples.map(([, v]) => v[k] ?? 0.8), y))
  // columns inside the notch hold no data, so stay linear near its top edge
  if (y > 180 && y < 202) {
    const i = rowsY.findIndex((sy) => sy > y)
    const t = (y - rowsY[i - 1]) / (rowsY[i] - rowsY[i - 1])
    row.forEach((_v, k) => {
      row[k] = samples[i - 1][1][k] * (1 - t) + samples[i][1][k] * t
    })
  }
  const stops = half.map((x) => ({ x, color: rampColor(spline(sampleX, row, x)) }))
  return { y, stops: [...stops, ...stops.map((s) => ({ ...s, x: 229 - s.x })).reverse()] }
})

const SliceMesh = () => (
  <g transform="translate(169 48)" shapeRendering="crispEdges">
    <clipPath id="slice"><path d="M0 0h229v401H190V202H39v199H0z" /></clipPath>
    <g clipPath="url(#slice)">
      {sliceRows.map(({ y, stops }) => (
        <g key={y}>
          <linearGradient id={`row${y}`} gradientUnits="userSpaceOnUse" x1="0" x2="229" y1="0" y2="0">
            {stops.map((s) => <stop key={s.x} offset={s.x / 229} stopColor={s.color} />)}
          </linearGradient>
          <rect y={y} width="229" height={STEP} fill={`url(#row${y})`} />
        </g>
      ))}
    </g>
  </g>
)

const ticks = [[256, '2.2e+01'], [279, '20'], [327, '15'], [374, '10'], [421, '5'], [468, '0.0e+00']]

const RenderScene = () => (
  <svg viewBox="0 0 641 481" className="size-full" fontFamily="Liberation Sans, sans-serif" role="img" aria-label="Slice colored by V Magnitude">
    <SliceMesh />
    {/* orientation axes */}
    <path d="M60.500 420V398" stroke="#22e022" strokeWidth="1.500" />
    <path d="M58 391q3-4 6 0l-1 5h-4z" fill="#0a9a1c" />
    <path d="M61 420H33" stroke="#f5f500" strokeWidth="1.500" />
    <ellipse cx="32" cy="420" rx="3" ry="2" fill="#c9c400" />
    <circle cx="61" cy="420" r="2" fill="#f00" />
    <text x="62" y="394" fontSize="10">Z</text>
    <text x="35" y="420" fontSize="9">Y</text>
    <text x="62" y="420" fontSize="8">X</text>
    {/* color legend */}
    <linearGradient id="coolwarm" x1="0" y1="0" x2="0" y2="1">
      <stop offset="0" stopColor="#b40426" />
      <stop offset=".125" stopColor="#dc5d4a" />
      <stop offset=".25" stopColor="#f49a7b" />
      <stop offset=".375" stopColor="#f5c1a9" />
      <stop offset=".5" stopColor="#dddddd" />
      <stop offset=".625" stopColor="#b9d0f9" />
      <stop offset=".75" stopColor="#8db0fe" />
      <stop offset=".875" stopColor="#6282ea" />
      <stop offset="1" stopColor="#3b4cc0" />
    </linearGradient>
    <rect x="524" y="256" width="16" height="212" fill="url(#coolwarm)" />
    {ticks.map(([y, label]) => (
      <g key={label}>
        <path d={`M536 ${y + 0.5}h12`} stroke="#000" />
        <text x="554" y={y + 4} fontSize="16" fill="#1a1a1a">{label}</text>
      </g>
    ))}
    <text transform="rotate(-90 631 411)" x="631" y="411" fontSize="18" fill="#1a1a1a">V Magnitude</text>
  </svg>
)

// ---------- Render view ----------

const selectionTools = [
  ['Add selection', <><Dashed /><path d="M12 6v12M6 12h12" stroke="#6a9650" strokeWidth="5" /><path d="M12 7v10M7 12h10" stroke="#8cc56e" strokeWidth="3" /></>],
  ['Subtract selection', <><Dashed /><path d="M6 12h12" stroke={RED} strokeWidth="4" /></>],
  ['Toggle selection', <><Dashed /><path d="M11 4v8M7 8h8" stroke="#7ab55c" strokeWidth="2.500" /><path d="M6 16h9" stroke={RED} strokeWidth="3" /><SmallPointer /></>],
  null,
  ['Select cells', <><Dashed /><path d="m11 5 7 12H4z" fill="#8cc56e" stroke="#5f864a" /><SmallPointer /></>],
  ['Select points', <><Dashed /><path d="m12 6-6 12M12 6l5 8" stroke="#aaa" /><circle cx="12" cy="5" r="2" fill="#b5482e" stroke="none" /><circle cx="5" cy="18" r="2" fill="#b5482e" stroke="none" /><SmallPointer /></>],
  ['Select cells through', <><path d="m2 8 10-6 10 4v8l-9 2-11-1z" fill="#8cc56e" stroke="#5f864a" /><path d="m2 8 11 2 9-4M13 10v6" stroke="#5f864a" /><SmallPointer /></>],
  ['Select points through', <><path d="m2 9 6-6h13v12l-6 6H2zM2 9h13v12M15 9l6-6" stroke="#bbb" strokeDasharray="2 2" /><path d="M7 4v4M18 6v4M10 13v4" stroke="#d5655a" strokeWidth="2" strokeDasharray="2 2" /><SmallPointer /></>],
  ['Polygon cells', <><path d="M2 3h13l7 6-3 10M3 20h9" stroke="#aaa" strokeDasharray="3 2" /><path d="m4 13 9-6v11z" fill="#8cc56e" stroke="#5f864a" /><SmallPointer /></>],
  ['Polygon points', <><path d="M2 3h13l7 6-3 10-8 3" stroke="#aaa" strokeDasharray="3 2" />{[[6, 6], [12, 5], [9, 11], [4, 13], [15, 9], [10, 17], [17, 15]].map(([x, y]) => <circle key={`${x}-${y}`} cx={x} cy={y} r="1.800" fill="#c0482f" stroke="none" />)}<SmallPointer /></>],
  ['Hover points', <><Dashed /><circle cx="7" cy="7" r="3.200" fill={BLUE} stroke="#1d6da3" /><circle cx="7" cy="17" r="3.200" fill={BLUE} stroke="#1d6da3" /><path d="m17 15 5 6" stroke="#888" strokeWidth="2.500" /><circle cx="15.500" cy="12.500" r="4" fill={GREEN} stroke="#6e8a58" /></>],
]

const LayoutTabs = () => (
  <div role="tablist" className="flex h-7 shrink-0 items-end border-b border-[#b3b3b3]">
    <div className="-mb-px flex h-[27px] w-[113px] shrink-0 items-center rounded-t-[4px] border border-b-0 border-[#b3b3b3] bg-[#fbfbfb] pl-2.5">
      <button role="tab" aria-selected="true" type="button" className="flex items-center gap-[3px] text-[10px]">
        <span className="h-4 w-4 border border-t-4 border-[#2e2e2e] bg-white" />
        Layout #1
      </button>
      <span className="ml-1 flex"><DockButton kind="Close" /></span>
    </div>
    <button type="button" aria-label="New layout" className="h-6 w-[30px] rounded-t-[3px] border border-b-0 border-l-0 border-[#b3b3b3] bg-[#eaeaea]">+</button>
  </div>
)

const WindowButton = ({ label, children }) => (
  <PushButton label={label} className="h-6 w-[26px] shrink-0">
    {children}
  </PushButton>
)

const ViewToolbar = () => (
  <div role="toolbar" aria-label="View" className="flex h-[27px] shrink-0 items-center">
    <ViewTool label="Camera undo"><Icon className="size-[18px]"><g transform="translate(3 1)"><CameraBody /></g><path d="M1.500 11v11l9-1.500-3-2.500q5-5 8-1 .5 3-1.500 5 6-3 4-8-4-6-12-.5z" fill={RED} stroke="#c62026" strokeWidth=".5" /></Icon></ViewTool>
    <ViewTool label="Camera redo"><Icon className="size-[18px]"><g transform="translate(1 1)"><CameraBody faded /></g><path d="M22.500 11v11l-9-1.500 3-2.500q-5-5-8-1-.5 3 1.500 5-6-3-4-8 4-6 12-.5z" fill="#cfcfcf" stroke="#999" strokeWidth=".7" /></Icon></ViewTool>
    <Sep />
    <ViewTool label="Capture"><Icon className="size-5"><path d="M1 5V1h4M19 1h4v4M23 19v4h-4M5 23H1v-4" stroke="#999" /><g transform="translate(1 3)"><CameraBody /></g></Icon></ViewTool>
    <Sep />
    <ViewTool label="Toggle 3D"><span className="font-['Noto_Sans',sans-serif] text-[11px] font-bold text-[#6e6b62]">3D</span></ViewTool>
    <ViewTool label="Adjust view"><Icon className="size-5"><CameraBody /><path d="m11 12 9 8" stroke="#8b6c22" strokeWidth="4.500" /><path d="m11 12 9 8" stroke={GOLD} strokeWidth="2.800" /></Icon></ViewTool>
    <Sep />
    {selectionTools.map((tool, i) => tool
      ? <ViewTool key={tool[0]} label={tool[0]}><Icon className="size-[18px]">{tool[1]}</Icon></ViewTool>
      : <Sep key={i} />)}
    <span className="flex-1" />
    <svg viewBox="0 0 10 8" className="h-[7px] w-[9px] shrink-0" fill="none" stroke="#444" strokeWidth="1.300"><path d="m1 1 3 3-3 3M5.500 1l3 3-3 3" /></svg>
    <a href="#RenderView1" className="mr-3 shrink-0 text-[12px] font-bold underline underline-offset-2">RenderView1</a>
    <div className="flex gap-px">
      <WindowButton label="Split horizontal"><Icon className="size-4"><path d="M2 2h20v20H2zM12 2v20" fill="#cfd8f0" stroke="#8d93a5" strokeWidth="1.500" /></Icon></WindowButton>
      <WindowButton label="Split vertical"><Icon className="size-4"><path d="M2 2h20v20H2zM2 12h20" fill="#cfd8f0" stroke="#8d93a5" strokeWidth="1.500" /></Icon></WindowButton>
      <WindowButton label="Maximize view"><span className="h-[18px] w-[18px] border-2 border-t-[6px] border-[#2b2b2b] bg-white" /></WindowButton>
      <WindowButton label="Close view">
        <svg viewBox="0 0 11 11" className="size-[11px]" fill="none" stroke="#555"><rect x=".5" y=".5" width="10" height="10" rx="2" /><path d="m3 3 5 5m0-5L3 8" strokeWidth="1.800" /></svg>
      </WindowButton>
    </div>
  </div>
)

const StatusBar = () => (
  <footer className="flex h-[30px] shrink-0 items-start gap-0.5 pt-[3px] pl-[338px]">
    <PushButton label="Abort" disabled className="mt-[3px] size-5 shrink-0">
      <Icon className="size-2.5"><path d="m4 4 16 16m0-16L4 20" stroke="#8a8a8a" strokeWidth="7" /></Icon>
    </PushButton>
    <div className="h-[25px] flex-1 border border-t-[#a0a0a0] border-r-white border-b-white border-l-[#a0a0a0]" />
    <div className={clsx(boxStyles, 'ml-1 flex h-[25px] w-[336px] shrink-0 items-center overflow-hidden bg-white')}>
      <span className="h-full w-[31px] shrink-0 border-r border-[#86a885] bg-linear-to-b from-[#d5f2d3] to-[#bcdfba]" />
      <span className="pl-[7px] font-['Noto_Sans',sans-serif] text-[12px] whitespace-nowrap">DESKTOP-2PGB7GI: 23.7 GiB/255.7 GiB 9.3%</span>
    </div>
    <span className="mt-3 mr-0.5 ml-2 size-3 bg-[radial-gradient(circle,#b4b4b4_1px,transparent_1px)] bg-[size:4px_4px] [clip-path:polygon(100%_0,100%_100%,0_100%)]" />
  </footer>
)

export default function App() {
  return (
    <div className="h-screen bg-[#59646f] p-px font-['Noto_Sans',sans-serif]">
      <div className="flex h-full flex-col overflow-hidden rounded-lg bg-[#efefef]">
        <TitleBar />
        <MenuBar />
        <div className="flex min-h-0 flex-1 flex-col font-['Liberation_Mono',monospace] text-[10px] text-black">
          <MainToolbar />
          <ColorToolbar />
          <FilterToolbar />
          <main className="flex min-h-0 flex-1">
            <LeftDock />
            <div className="flex w-[5px] shrink-0 items-center justify-center">
              <span className="h-4 border-l border-dotted border-[#aaa]" />
            </div>
            <section className="flex min-w-0 flex-1 flex-col">
              <LayoutTabs />
              <div className="flex min-h-0 flex-1 flex-col border-b border-l border-[#b3b3b3] pr-0.5 pb-px pl-px">
                <ViewToolbar />
                <div className="min-h-0 flex-1 border-2 border-[#0000f5] bg-white">
                  <RenderScene />
                </div>
              </div>
            </section>
          </main>
          <StatusBar />
        </div>
      </div>
    </div>
  )
}
